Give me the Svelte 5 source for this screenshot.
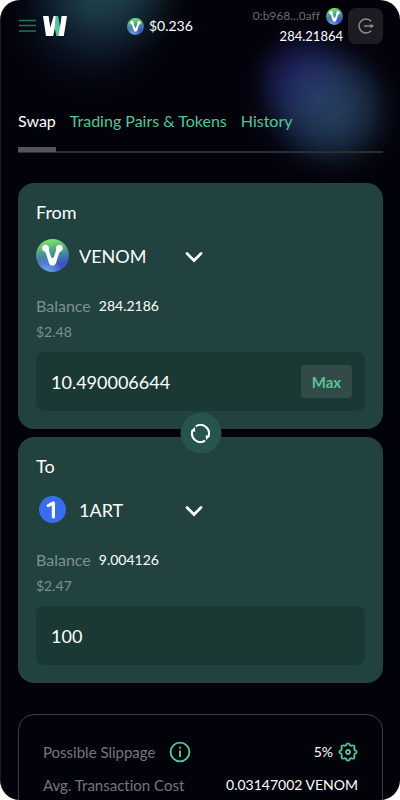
<script>
  const price = '$0.236';
  const wallet = { address: '0:b968...0aff', balance: '284.21864' };

  const tabs = ['Swap', 'Trading Pairs & Tokens', 'History'];
  const tokens = ['VENOM', '1ART'];

  let activeTab = $state('Swap');
  let sides = $state([
    { id: 'from', label: 'From', token: 'VENOM', balance: '284.2186', usd: '$2.48', amount: '10.490006644' },
    { id: 'to', label: 'To', token: '1ART', balance: '9.004126', usd: '$2.47', amount: '100' }
  ]);

  function selectTab(e, tab) {
    e.preventDefault();
    activeTab = tab;
  }

  function setMax(side) {
    side.amount = side.balance;
  }

  function flip() {
    const [a, b] = sides;
    sides = [
      { ...b, id: 'from', label: 'From' },
      { ...a, id: 'to', label: 'To' }
    ];
  }
</script>

{#snippet venom()}
  <svg class="venom" viewBox="0 0 33 33" aria-hidden="true">
    <path
      fill="#fff"
      d="M9.6 5.8a3.4 3.4 0 0 1 3.3 4.2c-.2.9.2 1.8.5 2.7l1.7 5.2c.4 1.3 2.4 1.3 2.8 0l1.7-5.2c.3-.9.7-1.8.5-2.7a3.4 3.4 0 1 1 4.5 2.4c-.8.3-1.3 1-1.5 1.8l-3.1 9.7c-.5 1.6-1.7 2.6-3.5 2.6s-3-1-3.5-2.6L9.9 14.2c-.2-.8-.7-1.5-1.5-1.8a3.4 3.4 0 0 1 1.2-6.6z"
    />
  </svg>
{/snippet}

<div class="screen">
  <header>
    <div class="brand">
      <button class="menu" aria-label="Menu">
        <svg width="18" height="14" viewBox="0 0 18 14">
          <path d="M1 1.5h17M1 6.5h17M1 12h17" stroke="#2b7059" stroke-width="1.3" />
        </svg>
      </button>
      <a class="logo" href="#home" aria-label="Home">
        <svg width="24" height="20" viewBox="0 0 24 20">
          <path d="M0 0h5.6l1.7 11.5L10.6 0h3.8L10.2 20H3z" fill="#fff" />
          <path d="M12.600 0h2.600L18.400 20h-5L11.700 12z" fill="#56c596" />
          <path d="M18.600 0H24l-3.200 20H15.600z" fill="#fff" />
        </svg>
      </a>
    </div>

    <div class="price">
      {@render venom()}
      <span>{price}</span>
    </div>

    <div class="account">
      <div class="wallet">
        <div class="address">
          <span>{wallet.address}</span>
          {@render venom()}
        </div>
        <div class="total">{wallet.balance}</div>
      </div>
      <button class="logout" aria-label="Log out">
        <svg width="18" height="18" viewBox="0 0 18 18" fill="none" stroke="#8d8e91" stroke-width="1.5">
          <path d="M14.200 4.300A7 7 0 1 0 14.200 13.700" />
          <path d="M7 9h8" />
          <path d="M13.500 6.800 17 9l-3.500 2.200z" fill="#8d8e91" stroke="none" />
        </svg>
      </button>
    </div>
  </header>

  <nav>
    {#each tabs as tab}
      <a href="#{tab}" class:active={tab === activeTab} onclick={(e) => selectTab(e, tab)}>{tab}</a>
    {/each}
  </nav>

  <main>
    <div class="cards">
      {#each sides as side (side.id)}
        <section class="card">
          <h2><label for="{side.id}-amount">{side.label}</label></h2>
          <div class="token">
            <span class="icon">
              {#if side.token === 'VENOM'}
                {@render venom()}
              {:else}
                <svg width="27" height="27" viewBox="0 0 27 27" aria-hidden="true">
                  <circle cx="13.5" cy="13.5" r="13.5" fill="#3a6cf0" />
                  <path d="M9.2 9.6 14.4 7v14" fill="none" stroke="#fff" stroke-width="3.2" stroke-linecap="round" stroke-linejoin="round" />
                </svg>
              {/if}
            </span>
            <div class="picker">
              <select aria-label="{side.label} token" bind:value={side.token}>
                {#each tokens as token}
                  <option>{token}</option>
                {/each}
              </select>
              <svg width="18" height="14" viewBox="0 0 18 14" aria-hidden="true">
                <path d="M2 4.5l7 7 7-7" fill="none" stroke="#fff" stroke-width="2.7" stroke-linecap="round" />
              </svg>
            </div>
          </div>
          <p class="balance">Balance <b>{side.balance}</b></p>
          <p class="usd">{side.usd}</p>
          <div class="field">
            <input id="{side.id}-amount" type="text" inputmode="decimal" bind:value={side.amount} />
            {#if side.id === 'from'}
              <button class="max" onclick={() => setMax(side)}>Max</button>
            {/if}
          </div>
        </section>
      {/each}

      <button class="flip" aria-label="Swap direction" onclick={flip}>
        <svg width="20" height="20" viewBox="0 0 20 20" fill="none" stroke="#fff" stroke-width="2">
          <path d="M5.300 2.900A8.500 8.500 0 0 1 18 12.800M14.700 17.100A8.500 8.500 0 0 1 2 7.200" />
          <path d="M19.800 12.600 15.200 11.800 15.600 16.600zM.2 7.400 4.800 8.200 4.400 3.400z" fill="#fff" stroke="none" />
        </svg>
      </button>
    </div>

    <dl class="summary">
      <div class="row">
        <dt>
          Possible Slippage
          <button class="info" aria-label="About slippage">
            <svg width="22" height="22" viewBox="0 0 22 22" fill="none" stroke="#56c596" stroke-width="1.9">
              <circle cx="11" cy="11" r="9.400" />
              <path d="M11 9.500V16M11 5.800v2" />
            </svg>
          </button>
        </dt>
        <dd>
          5%
          <button class="info" aria-label="Slippage settings">
            <svg width="20" height="20" viewBox="0 0 20 20" fill="none" stroke="#56c596" stroke-width="1.8" stroke-linejoin="round">
              <path d="M8.3 3.1Q8.5 1.3 10 1.3t1.7 1.8l1.9.8Q15 2.8 16.1 3.9t0 2.5l.8 1.9Q18.7 8.5 18.7 10t-1.8 1.7l-.8 1.9Q17.2 15 16.1 16.1t-2.5 0l-1.9.8Q11.5 18.7 10 18.7t-1.7-1.8l-1.9-.8Q5 17.2 3.9 16.1t0-2.5l-.8-1.9Q1.3 11.5 1.3 10t1.8-1.7l.8-1.9Q2.8 5 3.9 3.9t2.5 0z" />
              <circle cx="10" cy="10" r="2" />
            </svg>
          </button>
        </dd>
      </div>
      <div class="row">
        <dt>Avg. Transaction Cost</dt>
        <dd>0.03147002 VENOM</dd>
      </div>
    </dl>
  </main>
</div>

<style>
  :global(body) {
    margin: 0;
    background: #fff;
  }
  .screen {
    box-sizing: border-box;
    height: 100vh;
    overflow-y: auto;
    scrollbar-width: none;
    padding: 8px 17px 32px;
    border-left: 1px solid #1c1c22;
    border-radius: 20px;
    color: #fff;
    font-family: Lato, sans-serif;
    font-size: 15px;
    font-variant-ligatures: none;
    line-height: 20px;
    background:
      radial-gradient(circle 90px at 108px -28px, rgba(44, 98, 100, 0.8), rgba(44, 98, 100, 0.4) 45%, rgba(44, 98, 100, 0.1) 78%, transparent),
      radial-gradient(circle 90px at 90px 12px, rgba(24, 46, 74, 0.7), rgba(24, 46, 74, 0.4) 45%, rgba(24, 46, 74, 0.1) 78%, transparent),
      radial-gradient(circle 68px at calc(100% - 62px) 114px, rgba(46, 84, 104, 0.5), rgba(46, 84, 104, 0.3) 45%, rgba(46, 84, 104, 0.06) 80%, transparent),
      radial-gradient(circle 80px at calc(100% - 80px) 100px, rgba(42, 62, 120, 0.75), rgba(42, 62, 120, 0.5) 40%, rgba(42, 62, 120, 0.08) 78%, transparent),
      radial-gradient(circle 56px at calc(100% - 100px) 76px, rgba(36, 30, 116, 0.6), rgba(36, 30, 116, 0.35) 45%, rgba(36, 30, 116, 0.06) 80%, transparent),
      #02020a;
  }
  button {
    padding: 0;
    border: none;
    background: none;
    font: inherit;
    color: inherit;
    cursor: pointer;
  }
  svg {
    display: block;
  }
  .venom {
    width: 17px;
    height: 17px;
    border-radius: 50%;
    background:
      radial-gradient(circle at 30% 105%, #79b8ee 0%, rgba(121, 184, 238, 0) 40%),
      linear-gradient(170deg, #7be06c 10%, #4d9c8c 40%, #3b57c4 72%);
  }

  header {
    display: flex;
    justify-content: space-between;
    align-items: center;
    height: 36px;
  }
  .brand,
  .price,
  .account,
  .address {
    display: flex;
    align-items: center;
  }
  .brand {
    gap: 7px;
  }
  .price {
    gap: 5px;
  }
  .price,
  dd {
    font-size: 14px;
  }
  .account {
    gap: 5px;
  }
  .wallet {
    text-align: right;
    font-size: 13px;
  }
  .address {
    gap: 6px;
    font-size: 12px;
    color: #6b6b70;
  }
  .logout {
    display: grid;
    place-items: center;
    width: 35px;
    height: 36px;
    border-radius: 8px;
    background: #1c1d22;
  }

  nav {
    display: flex;
    gap: 14px;
    margin-top: 67px;
    border-bottom: 2px solid #2c2c33;
    font-size: 16px;
  }
  nav a {
    height: 36px;
    margin-bottom: -1px;
    border-bottom: 5px solid transparent;
    color: #56c596;
    text-decoration: none;
  }
  nav a.active {
    color: #fff;
    border-color: #555559;
  }

  .cards {
    position: relative;
    display: grid;
    grid-template-columns: minmax(0, 1fr);
    gap: 8px;
    margin-top: 30px;
  }
  .card {
    padding: 18px;
    border-radius: 16px;
    background: #21423f;
  }
  h2 {
    margin: 0 0 16px;
    font-size: 18px;
    font-weight: 400;
    line-height: 22px;
  }
  .token {
    display: flex;
    align-items: center;
    gap: 10px;
    height: 33px;
    margin-bottom: 21px;
  }
  .icon {
    display: grid;
    place-items: center;
    width: 33px;
  }
  .icon .venom {
    width: 33px;
    height: 33px;
  }
  .picker {
    display: grid;
    align-items: center;
    width: 124px;
  }
  .picker > * {
    grid-area: 1 / 1;
  }
  .picker svg {
    justify-self: end;
    pointer-events: none;
  }
  select {
    appearance: none;
    width: 100%;
    padding: 0;
    border: none;
    background: none;
    color: #fff;
    font: inherit;
    font-size: 18px;
    line-height: 24px;
  }
  option {
    background: #21423f;
  }
  .card p {
    margin: 0;
    line-height: 26px;
    color: #7d918f;
  }
  .card .balance {
    display: flex;
    align-items: center;
    gap: 8px;
    height: 26px;
    font-size: 16px;
  }
  .balance b {
    font-size: 14px;
    font-weight: 400;
    color: #fff;
  }
  .usd {
    font-size: 14px;
  }
  .field {
    display: flex;
    align-items: center;
    gap: 12px;
    height: 59px;
    margin-top: 7px;
    padding: 0 13px 0 15px;
    border-radius: 8px;
    background: #1b3934;
  }
  .field input {
    flex: 1;
    min-width: 0;
    padding: 0;
    border: none;
    outline: none;
    background: none;
    color: #fff;
    font: inherit;
    font-size: 18px;
  }
  .max {
    width: 51px;
    height: 33px;
    border-radius: 4px;
    background: #334b48;
    color: #56c596;
    font-weight: 700;
  }
  .flip {
    position: absolute;
    top: 50%;
    left: 50%;
    display: grid;
    place-items: center;
    width: 41px;
    height: 41px;
    border-radius: 50%;
    background: #275350;
    transform: translate(-50%, -50%);
  }

  .summary {
    margin: 31px 0 0;
    padding: 20px 24px;
    border: 1px solid #3d3d42;
    border-radius: 16px;
  }
  .row {
    display: flex;
    justify-content: space-between;
    align-items: center;
    height: 33px;
  }
  dt,
  dd {
    display: flex;
    align-items: center;
    margin: 0;
  }
  dt {
    gap: 14px;
    color: #76767a;
  }
  dd {
    gap: 5px;
  }
</style>
